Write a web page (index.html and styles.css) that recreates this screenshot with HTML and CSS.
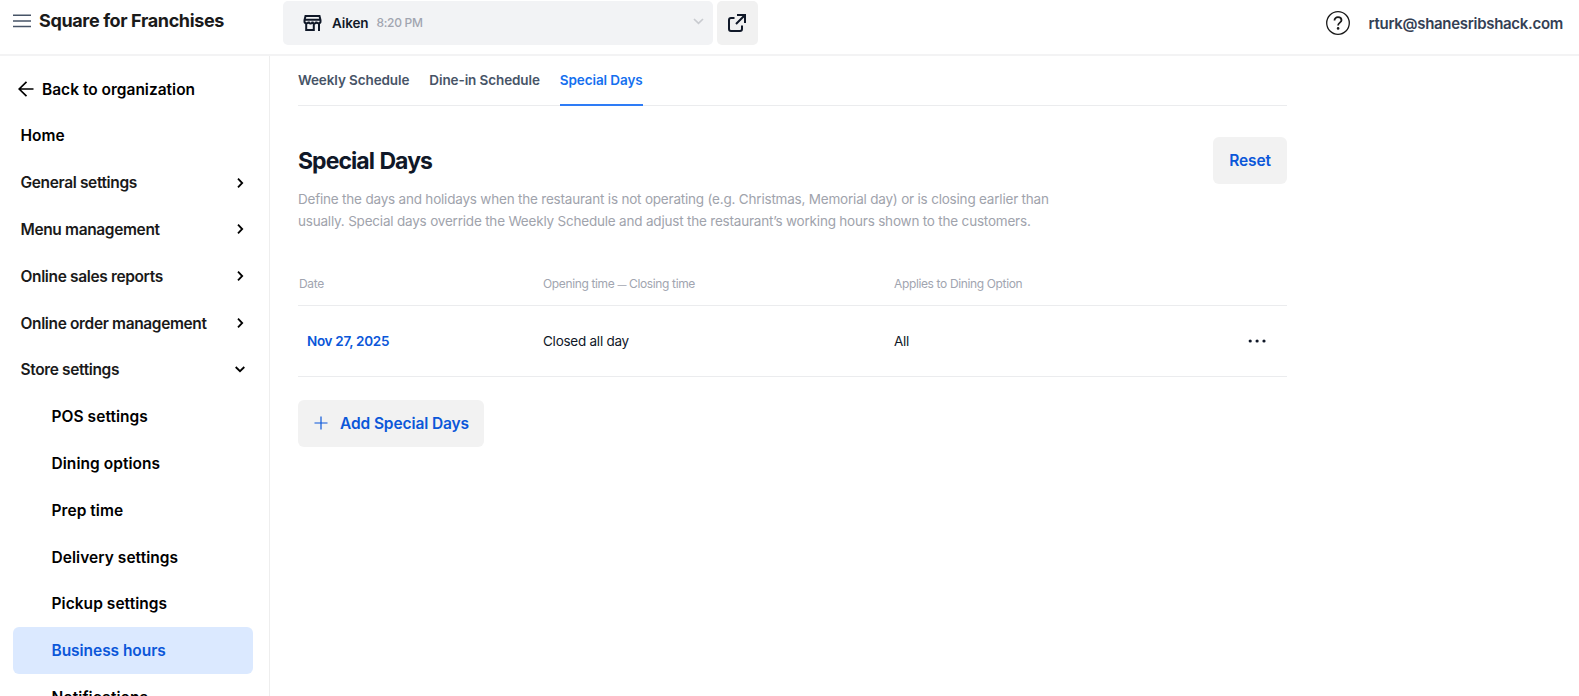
FILE: index.html
```html
<!DOCTYPE html>
<html lang="en">
  <head>
    <meta charset="UTF-8">
    <meta name="viewport" content="width=device-width, initial-scale=1.0">
    <title>Special Days</title>
    <link rel="stylesheet" href="styles.css">
  </head>
  <body>
    <header class="topbar">
      <div class="brand">
        <svg class="menu-icon" width="18" height="14" viewBox="0 0 18 14" fill="none" stroke="currentColor" stroke-width="1.5">
          <path d="M0 1.200h18M0 7h18M0 12.500h18" />
        </svg>
        <span class="brand-name">Square for Franchises</span>
      </div>

      <div class="store-picker">
        <svg class="store-icon" width="19" height="16" viewBox="0 0 19 16" fill="none" stroke="currentColor" stroke-width="2">
          <path d="M2.500 1h14l1 4v1.500a1.700 1.700 0 0 1-1.700 1.700h-.6A1.900 1.900 0 0 1 13.300 6.500a1.900 1.900 0 0 1-3.800 0 1.900 1.900 0 0 1-3.800 0A1.900 1.900 0 0 1 3.800 8.200h-.6A1.700 1.700 0 0 1 1.500 6.500V5z" />
          <path d="M1.500 4.700h16M3.200 8.500V15h7.600V9M16 8.500V16" />
        </svg>
        <span class="store-name">Aiken</span>
        <span class="store-time">8:20 PM</span>
        <svg class="picker-arrow" width="11" height="7" viewBox="0 0 11 7" fill="none" stroke="currentColor" stroke-width="1.700">
          <path d="M1 1l4.500 4.300L10 1" />
        </svg>
      </div>

      <button class="open-store" aria-label="Open store">
        <svg width="20" height="20" viewBox="0 0 20 20" fill="none" stroke="currentColor" stroke-width="2">
          <path d="M7.500 5H4a2 2 0 0 0-2 2v9a2 2 0 0 0 2 2h9a2 2 0 0 0 2-2v-3.500M10 2h8v8M18 2L9 11" />
        </svg>
      </button>

      <div class="account">
        <svg class="help-icon" width="24" height="24" viewBox="0 0 24 24" fill="none" stroke="currentColor">
          <circle cx="12" cy="12" r="11.300" stroke-width="1.300" />
          <path d="M8.500 9.500c0-2 1.500-3.300 3.500-3.300s3.500 1.200 3.500 3c0 2.500-3.400 2.400-3.400 5.200" stroke-width="1.800" />
          <circle cx="12.100" cy="17.400" r="1.300" fill="currentColor" stroke="none" />
        </svg>
        <span class="account-email">rturk@shanesribshack.com</span>
      </div>
    </header>

    <div class="layout">
      <nav class="sidebar">
        <a class="nav-item back">
          <svg width="16" height="16" viewBox="0 0 16 16" fill="none" stroke="currentColor" stroke-width="1.700">
            <path d="M8.500 .8L1.200 8l7.300 7.200M1.200 8H15.500" />
          </svg>
          Back to organization
        </a>
        <a class="nav-item">Home</a>
        <a class="nav-item group">General settings <svg class="arrow" width="12" height="12" viewBox="0 0 12 12"><path d="M4 1.700L8.200 6 4 10.300" /></svg></a>
        <a class="nav-item group">Menu management <svg class="arrow" width="12" height="12" viewBox="0 0 12 12"><path d="M4 1.700L8.200 6 4 10.300" /></svg></a>
        <a class="nav-item group">Online sales reports <svg class="arrow" width="12" height="12" viewBox="0 0 12 12"><path d="M4 1.700L8.200 6 4 10.300" /></svg></a>
        <a class="nav-item group">Online order management <svg class="arrow" width="12" height="12" viewBox="0 0 12 12"><path d="M4 1.700L8.200 6 4 10.300" /></svg></a>
        <a class="nav-item group">Store settings <svg class="arrow" width="12" height="12" viewBox="0 0 12 12"><path d="M1.700 3L6 7.200 10.300 3" /></svg></a>
        <a class="nav-item sub">POS settings</a>
        <a class="nav-item sub">Dining options</a>
        <a class="nav-item sub">Prep time</a>
        <a class="nav-item sub">Delivery settings</a>
        <a class="nav-item sub">Pickup settings</a>
        <a class="nav-item sub active">Business hours</a>
        <a class="nav-item sub">Notifications</a>
      </nav>

      <main class="content">
        <div class="tabs">
          <a class="tab">Weekly Schedule</a>
          <a class="tab">Dine-in Schedule</a>
          <a class="tab selected">Special Days</a>
        </div>

        <div class="title-row">
          <h1>Special Days</h1>
          <button class="btn reset">Reset</button>
        </div>

        <p class="description">Define the days and holidays when the restaurant is not operating (e.g. Christmas, Memorial day) or is closing earlier than<br>usually. Special days override the Weekly Schedule and adjust the restaurant’s working hours shown to the customers.</p>

        <div class="table">
          <div class="row head">
            <div class="date-head">Date</div>
            <div>Opening time <span class="dash">—</span> Closing time</div>
            <div>Applies to Dining Option</div>
            <div></div>
          </div>
          <div class="row">
            <div class="date">Nov 27, 2025</div>
            <div>Closed all day</div>
            <div>All</div>
            <div class="more">
              <svg width="18" height="4" viewBox="0 0 18 4" fill="currentColor">
                <circle cx="2.200" cy="2" r="1.600" /><circle cx="9.100" cy="2" r="1.600" /><circle cx="16" cy="2" r="1.600" />
              </svg>
            </div>
          </div>
        </div>

        <button class="btn add">
          <svg class="plus" width="14" height="14" viewBox="0 0 14 14" fill="none" stroke="currentColor" stroke-width="1.200">
            <path d="M7 .5v13M.5 7h13" />
          </svg>
          <span>Add Special Days</span>
        </button>
      </main>
    </div>
  </body>
</html>
```
FILE: styles.css
```css
* {
  box-sizing: border-box;
}

body {
  margin: 0;
  height: 100vh;
  overflow: hidden;
  background-color: #ffffff;
  font-family: Inter, sans-serif;
  color: #101828;
}

button {
  border: none;
  padding: 0;
  font-family: inherit;
  cursor: pointer;
}

svg {
  flex-shrink: 0;
}

.topbar {
  display: flex;
  align-items: flex-start;
  height: 56px;
  border-bottom: 2px solid #f3f3f4;
}

.brand {
  display: flex;
  align-items: center;
  width: 283px;
  height: 41px;
  padding-left: 13px;
}

.menu-icon {
  color: #475467;
  margin-right: 8px;
}

.brand-name {
  font-size: 18px;
  font-weight: 700;
  letter-spacing: -0.36px;
  color: #1a1a1a;
}

.store-picker {
  display: flex;
  align-items: center;
  width: 430px;
  height: 44px;
  margin-top: 1px;
  padding: 0 14px 1px 20px;
  background-color: #f2f3f5;
  border-radius: 5px;
}

.store-name {
  margin-left: 10px;
  font-size: 13.5px;
  font-weight: 600;
  letter-spacing: -0.1px;
}

.store-time {
  margin-left: 8px;
  font-size: 12px;
  font-weight: 500;
  letter-spacing: -0.3px;
  color: #a1a5b0;
}

.picker-arrow {
  margin: 0 -5px 2px auto;
  color: #c9cbd0;
}

.open-store {
  display: flex;
  align-items: center;
  justify-content: center;
  width: 41px;
  height: 44px;
  margin: 1px 0 0 4px;
  padding: 0 1px 1px 0;
  background-color: #f1f1f1;
  border-radius: 5px;
  color: #101828;
}

.account {
  display: flex;
  align-items: center;
  height: 46px;
  margin-left: auto;
  padding-right: 16px;
}

.help-icon {
  margin-right: 19px;
  color: #1a1a1a;
}

.account-email {
  font-size: 15px;
  font-weight: 600;
  letter-spacing: -0.3px;
  color: #344054;
}

.layout {
  display: flex;
  height: 640px;
}

.sidebar {
  width: 270px;
  flex-shrink: 0;
  padding: 9.7px 16px 0 13px;
  border-right: 1px solid #eeeeee;
  overflow: hidden;
}

.nav-item {
  display: flex;
  align-items: center;
  height: 46.8px;
  padding: 0 7.5px;
  border-radius: 6px;
  font-size: 15.5px;
  font-weight: 600;
  color: #000000;
}

.back {
  gap: 8px;
  padding-left: 5px;
}

.group {
  letter-spacing: -0.36px;
  color: #1a1a1a;
}

.arrow {
  margin-left: auto;
  fill: none;
  stroke: #000000;
  stroke-width: 1.8;
}

.sub {
  padding-left: 38.5px;
  letter-spacing: 0.05px;
}

.active {
  letter-spacing: -0.05px;
  background-color: #dbe9ff;
  color: #0b57d9;
}

.content {
  width: 989px;
  margin-left: 28px;
}

.tabs {
  display: flex;
  gap: 20px;
  height: 50px;
  border-bottom: 1px solid #ebecee;
}

.tab {
  height: 50px;
  line-height: 49px;
  font-size: 13.5px;
  font-weight: 600;
  letter-spacing: -0.1px;
  color: #475467;
}

.selected {
  color: #1570ef;
  border-bottom: 2px solid #2e7cf6;
}

.title-row {
  display: flex;
  align-items: center;
  justify-content: space-between;
  height: 47px;
  margin-top: 31px;
}

h1 {
  margin: 0;
  font-size: 23px;
  font-weight: 700;
  letter-spacing: -0.95px;
  word-spacing: 1px;
}

.btn {
  display: flex;
  align-items: center;
  height: 47px;
  background-color: #f2f2f2;
  border-radius: 6px;
  font-size: 15.5px;
  font-weight: 600;
  letter-spacing: -0.1px;
  color: #0b57d9;
}

.reset {
  width: 74px;
  justify-content: center;
}

.description {
  margin: 5px 0 0;
  font-size: 13.5px;
  line-height: 21.5px;
  letter-spacing: -0.2px;
  white-space: nowrap;
  color: #a0a3ac;
}

.table {
  margin-top: 30px;
}

.row {
  display: grid;
  grid-template-columns: 245px 351px 1fr 39px;
  align-items: center;
  height: 71px;
  border-bottom: 1px solid #ebecee;
  font-size: 13.5px;
  letter-spacing: -0.25px;
}

.head {
  height: 44px;
  font-size: 12px;
  letter-spacing: -0.36px;
  color: #a1a5b0;
}

.date-head {
  padding-left: 1px;
}

.dash {
  font-size: 9px;
}

.date {
  padding-left: 9px;
  font-weight: 600;
  letter-spacing: -0.3px;
  color: #0b57d9;
}

.more {
  display: flex;
}

.add {
  gap: 12px;
  width: 186px;
  margin-top: 23px;
  padding-left: 16px;
}

.plus {
  margin-bottom: 2px;
}
```
